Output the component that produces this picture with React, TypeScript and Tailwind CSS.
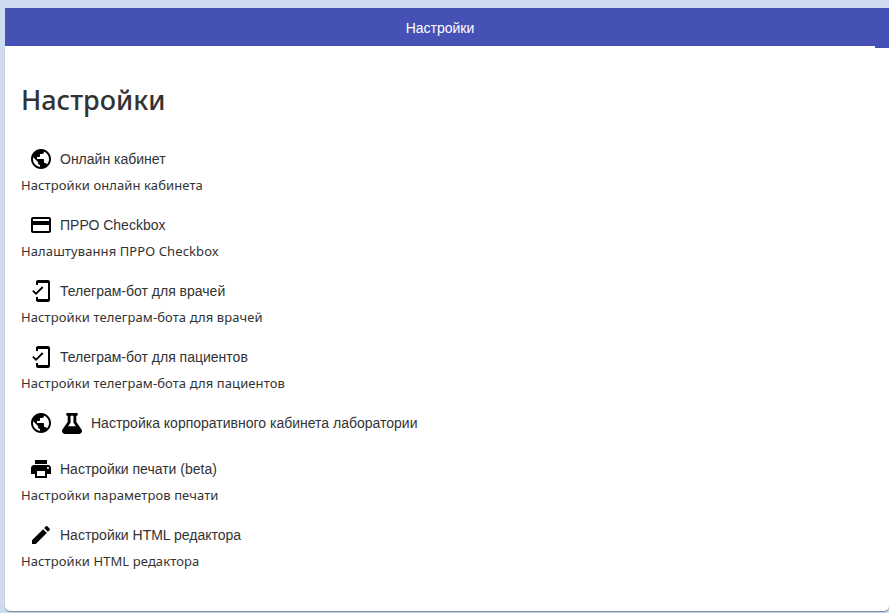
const PUBLIC = "M12 2C6.48 2 2 6.48 2 12s4.48 10 10 10 10-4.48 10-10S17.52 2 12 2zm-1 17.93c-3.95-.49-7-3.85-7-7.93 0-.62.08-1.21.21-1.79L9 15v1c0 1.1.9 2 2 2v1.93zm6.9-2.54c-.26-.81-1-1.39-1.9-1.39h-1v-3c0-.55-.45-1-1-1H8v-2h2c.55 0 1-.45 1-1V7h2c1.1 0 2-.9 2-2v-.41c2.93 1.19 5 4.06 5 7.41 0 2.08-.8 3.97-2.1 5.39z";
const CARD = "M20 4H4c-1.11 0-1.99.89-1.99 2L2 18c0 1.11.89 2 2 2h16c1.11 0 2-.89 2-2V6c0-1.11-.89-2-2-2zm0 14H4v-6h16v6zm0-10H4V6h16v2z";
const MOBILE = "M19 1H9c-1.1 0-2 .9-2 2v3h2V4h10v16H9v-2H7v3c0 1.1.9 2 2 2h10c1.1 0 2-.9 2-2V3c0-1.1-.9-2-2-2zM7.01 13.47l-2.55-2.55-1.27 1.27L7 16l7.37-7.37-1.27-1.27z";
const FLASK = "M437.2 403.5L320 215V64h8c13.3 0 24-10.7 24-24V24c0-13.3-10.7-24-24-24H120c-13.3 0-24 10.7-24 24v16c0 13.3 10.7 24 24 24h8v151L10.8 403.5C-18.5 450.6 15.3 512 70.9 512h306.2c55.7 0 89.4-61.5 60.1-108.5zM137.9 320l48.2-77.6c3.7-5.2 5.8-11.6 5.8-18.4V64h64v160c0 6.9 2.2 13.2 5.8 18.4l48.2 77.6h-172z";
const PRINT = "M19 8H5c-1.66 0-3 1.34-3 3v6h4v4h12v-4h4v-6c0-1.66-1.34-3-3-3zm-3 11H8v-5h8v5zm3-7c-.55 0-1-.45-1-1s.45-1 1-1 1 .45 1 1-.45 1-1 1zm-1-9H6v4h12V3z";
const EDIT = "M3 17.25V21h3.75L17.81 9.94l-3.75-3.75L3 17.25zM20.71 7.04c.39-.39.39-1.02 0-1.41l-2.34-2.34c-.39-.39-1.02-.39-1.41 0l-1.83 1.83 3.75 3.75 1.83-1.83z";

function Icon({ d }: { d: string }) {
  return (
    <svg viewBox="0 0 24 24" className="h-6 w-6 shrink-0 fill-black">
      <path d={d} />
    </svg>
  );
}

function Flask() {
  return (
    <div className="flex h-6 w-6 shrink-0 items-center justify-center">
      <svg viewBox="0 0 448 512" preserveAspectRatio="none" className="h-[21px] w-5 fill-black">
        <path d={FLASK} />
      </svg>
    </div>
  );
}

const items = [
  { icons: [PUBLIC], title: "Онлайн кабинет", sub: "Настройки онлайн кабинета" },
  { icons: [CARD], title: "ПРРО Checkbox", sub: "Налаштування ПРРО Checkbox" },
  { icons: [MOBILE], title: "Телеграм-бот для врачей", sub: "Настройки телеграм-бота для врачей" },
  { icons: [MOBILE], title: "Телеграм-бот для пациентов", sub: "Настройки телеграм-бота для пациентов" },
  { icons: [PUBLIC, FLASK], title: "Настройка корпоративного кабинета лаборатории", sub: "" },
  { icons: [PRINT], title: "Настройки печати (beta)", sub: "Настройки параметров печати" },
  { icons: [EDIT], title: "Настройки HTML редактора", sub: "Настройки HTML редактора" },
];

export default function App() {
  return (
    <div className="h-[613px] w-[889px] overflow-hidden bg-[#cfdbee] pt-2 pl-[5px] font-['Liberation_Sans',sans-serif]">
      <header className="relative flex h-[38px] items-center justify-center bg-[#4651b5] pt-0.5 pr-[14px] text-sm text-white">
        Настройки
        <div className="absolute top-full right-0 h-0.5 w-[14px] bg-[#4651b5]"></div>
      </header>
      <main className="h-[565px] rounded-b-[5px] bg-white pt-[37px] pl-[16px] shadow-[0_1px_1px_rgba(60,70,100,0.6)]">
        <h1 className="font-['Noto_Sans',sans-serif] text-[27px] leading-[34px] font-medium text-[#333]">Настройки</h1>
        <div className="mt-[30px] flex flex-col">
          {items.map((item) => (
            <div key={item.title} className={item.sub ? "h-[66px]" : "h-[46px]"}>
              <div className="flex h-6 items-center pl-2 text-sm text-[#333]">
                <div className="mr-[7px] flex gap-[7px]">
                  {item.icons.map((d, i) =>
                    d === FLASK ? <Flask key={i} /> : <Icon key={i} d={d} />
                  )}
                </div>
                {item.title}
              </div>
              {item.sub && (
                <div className="mt-[5px] font-['Noto_Sans',sans-serif] text-[13px] leading-[18px] tracking-[0.1px] text-[#333]">{item.sub}</div>
              )}
            </div>
          ))}
        </div>
      </main>
    </div>
  );
}
